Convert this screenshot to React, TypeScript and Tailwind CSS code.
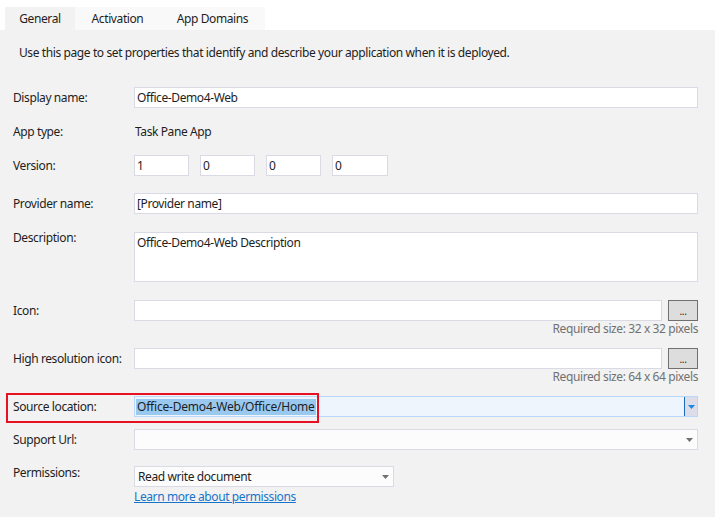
import React from "react";

const font = { fontFamily: '"Noto Sans", "Open Sans", sans-serif', letterSpacing: "-0.4px" };

const Label = ({ children, top = "" }: { children: React.ReactNode; top?: string }) => (
  <div className={`w-[121px] shrink-0 text-[12px] text-[#1e1e1e] ${top ? `leading-[16px] ${top}` : "flex items-center"}`}>
    {children}
  </div>
);

const TextBox = ({ value = "", className = "" }: { value?: string; className?: string }) => (
  <div className={`h-[21px] border border-[#dadae4] bg-white px-[2px] text-[12px] leading-[19px] text-[#1e1e1e] ${className}`}>
    {value}
  </div>
);

const Arrow = ({ color }: { color: string }) => (
  <svg width="7" height="4" viewBox="0 0 7 4">
    <path d="M0 0h7L3.5 4z" fill={color} />
  </svg>
);

const BrowseRow = ({ label, hint }: { label: string; hint: string }) => (
  <div>
    <div className="flex">
      <Label>{label}</Label>
      <div className="flex flex-1 gap-[6px]">
        <TextBox className="flex-1" />
        <button className="h-[21px] w-[30px] border border-[#707070] bg-[#dddddd] text-[10px] leading-[14px] text-[#1e1e1e]">
          ...
        </button>
      </div>
    </div>
    <div className="mt-[1px] text-right text-[12px] leading-[14px] text-[#717171]">{hint}</div>
  </div>
);

export default function App() {
  return (
    <div className="h-[517px] w-[715px] overflow-hidden bg-white" style={font}>
      {/* tabs */}
      <div className="flex h-[30px] items-end pl-[5px]">
        <div className="flex h-[23px] w-[70px] items-center justify-center bg-[#f2f2f2] text-[12px] text-[#1e1e1e]">General</div>
        <div className="flex h-[23px] w-[85px] items-center justify-center bg-[#f9f9f9] text-[12px] text-[#1e1e1e]">Activation</div>
        <div className="flex h-[23px] w-[105px] items-center justify-center bg-[#f9f9f9] text-[12px] text-[#1e1e1e]">App Domains</div>
      </div>

      <div className="h-[487px] bg-[#f2f2f2] pl-[13px] pr-[17px] pt-[15px]">
        <div className="pl-[6px] text-[12px] leading-[16px] text-[#1e1e1e]">
          Use this page to set properties that identify and describe your application when it is deployed.
        </div>

        <div className="mt-[26px] flex">
          <Label>Display name:</Label>
          <TextBox className="flex-1" value="Office-Demo4-Web" />
        </div>

        <div className="mt-[13px] flex h-[21px]">
          <Label>App type:</Label>
          <div className="flex items-center pl-[1px] text-[12px] text-[#1e1e1e]">Task Pane App</div>
        </div>

        <div className="mt-[13px] flex">
          <Label>Version:</Label>
          <div className="flex gap-[11px]">
            <TextBox className="w-[55px]" value="1" />
            <TextBox className="w-[55px]" value="0" />
            <TextBox className="w-[55px]" value="0" />
            <TextBox className="w-[56px]" value="0" />
          </div>
        </div>

        <div className="mt-[17px] flex">
          <Label>Provider name:</Label>
          <TextBox className="flex-1" value="[Provider name]" />
        </div>

        <div className="mt-[18px] flex">
          <Label top="-mt-[2px]">Description:</Label>
          <TextBox className="h-[50px] flex-1" value="Office-Demo4-Web Description" />
        </div>

        <div className="mt-[18px]">
          <BrowseRow label="Icon:" hint="Required size: 32 x 32 pixels" />
        </div>

        <div className="mt-[12px]">
          <BrowseRow label="High resolution icon:" hint="Required size: 64 x 64 pixels" />
        </div>

        <div className="relative mt-[12px] flex">
          <Label>Source location:</Label>
          <div className="flex h-[21px] flex-1 border border-[#b9d7fb] bg-[#eff5fd]">
            <div className="flex flex-1 items-center pl-[1px]">
              <span className="bg-[#99c9ef] px-[1px] text-[12px] leading-[16px] tracking-[-0.2px] text-[#1e1e1e]">
                Office-Demo4-Web/Office/Home
              </span>
            </div>
            <div className="flex w-[13px] items-center justify-center border-l border-[#1c69b6] bg-[#dcdde8]">
              <Arrow color="#1e88e5" />
            </div>
          </div>
          <div className="pointer-events-none absolute left-[-7px] top-[-3px] h-[30px] w-[313px] border-2 border-[#e81123]" />
        </div>

        <div className="mt-[12px] flex">
          <Label>Support Url:</Label>
          <div className="flex h-[21px] flex-1 items-center justify-end border border-[#dadae4] bg-[#fcfcfc] pr-[4px]">
            <Arrow color="#717171" />
          </div>
        </div>

        <div className="mt-[16px] flex">
          <Label top="-mt-[1px]">Permissions:</Label>
          <div>
            <div className="flex h-[21px] w-[260px] items-center justify-between border border-[#dadae4] bg-[#fcfcfc] pl-[3px] pr-[4px] text-[12px] text-[#1e1e1e]">
              <span>Read write document</span>
              <Arrow color="#717171" />
            </div>
            <a href="#" className="mt-[2px] block text-[12px] leading-[16px] text-[#1874c9] underline">
              Learn more about permissions
            </a>
          </div>
        </div>
      </div>
    </div>
  );
}
